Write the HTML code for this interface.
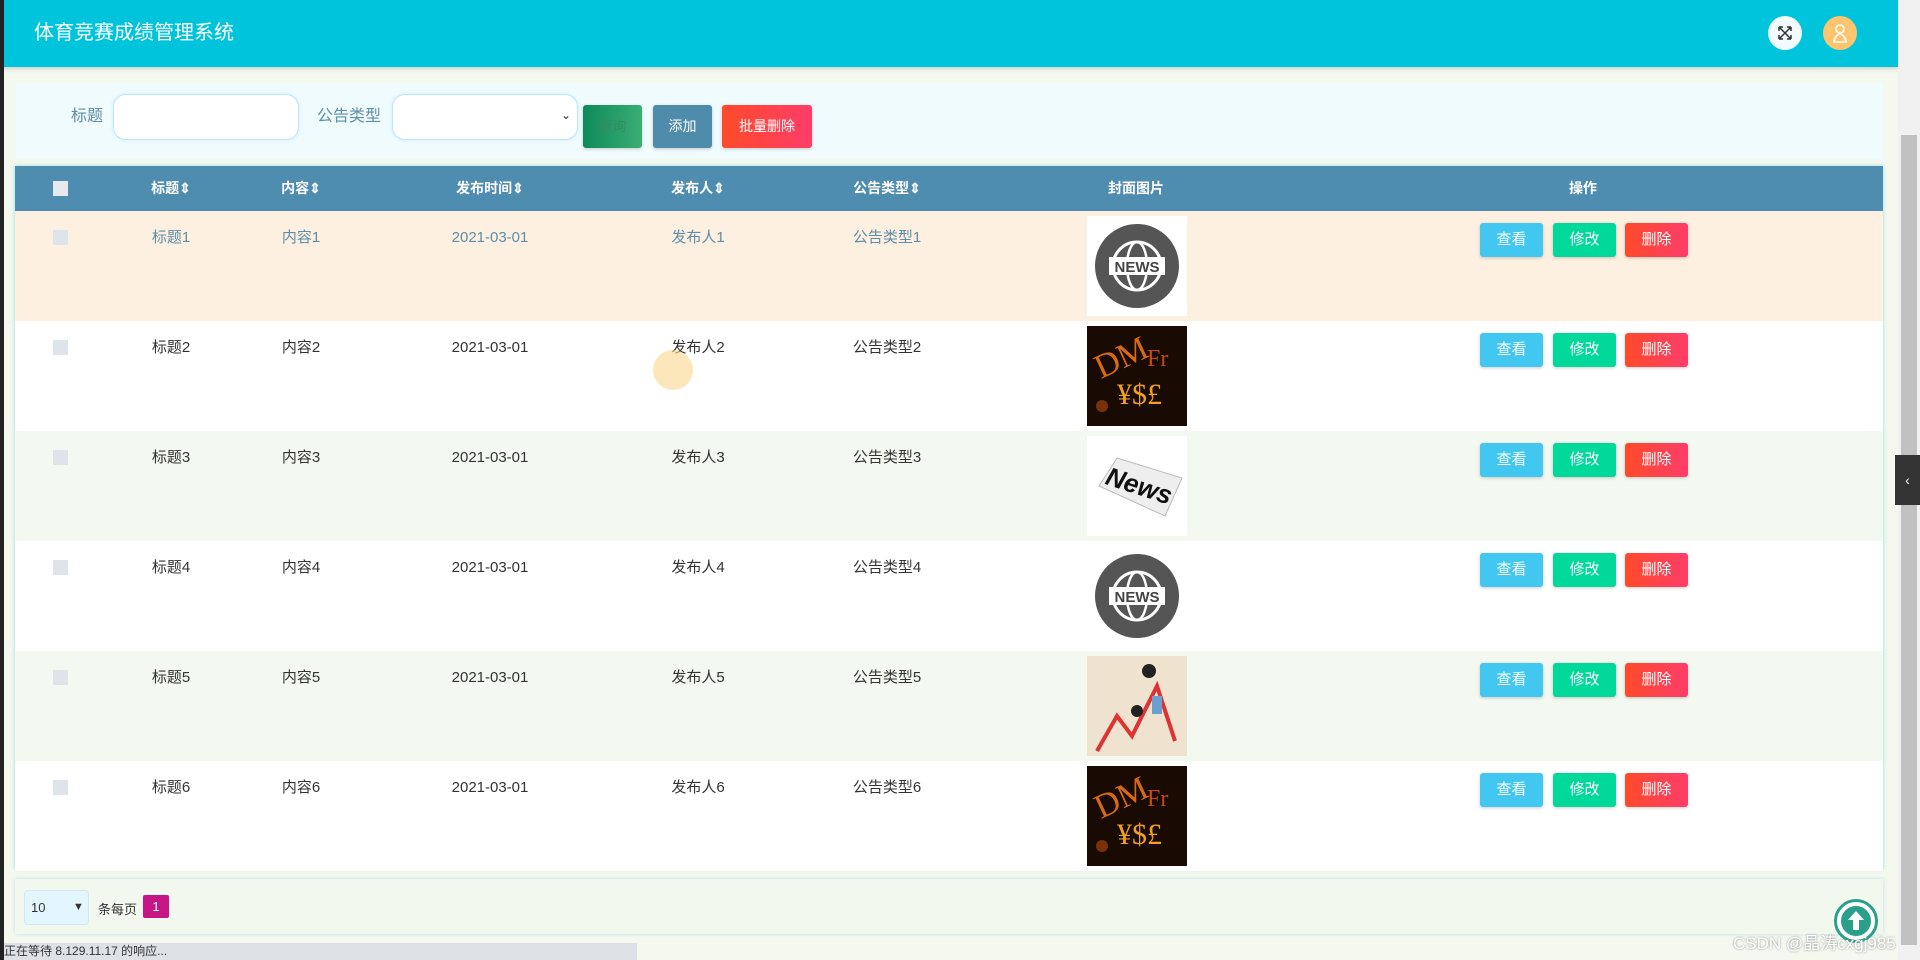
<!DOCTYPE html>
<html><head><meta charset="utf-8"><style>
*{margin:0;padding:0;box-sizing:border-box}
body{width:1920px;height:960px;overflow:hidden;background:#f4f8ef;font-family:"Liberation Sans","Noto Sans CJK SC",sans-serif;position:relative;font-size:15px;color:#333}
.a{position:absolute}
.hdr{left:0;top:0;width:1898px;height:67px;background:#00c4dc;box-shadow:0 2px 4px rgba(0,0,0,.15)}
.hdr .t{left:34px;top:20px;color:#fff;font-size:20px;line-height:26px}
.circ{border-radius:50%;width:34px;height:34px;top:16px}
.panel{left:15px;top:83px;width:1868px;height:76px;background:#f0fbfd}
.lbl{color:#5e8ea8;font-size:16px;line-height:20px}
.inp{background:#fff;border:1px solid #bfe6f5;border-radius:13px;box-shadow:0 0 4px #cdeefa}
.btn{color:#fff;font-size:14px;text-align:center;border-radius:3px;box-shadow:0 1px 3px rgba(0,0,0,.2)}
.tbl{left:15px;top:166px;width:1868px;height:703px;background:#fff;box-shadow:0 0 4px #8fe0e6}
.th{left:0;top:0;width:100%;height:45px;background:#4e8db0;color:#fff;font-weight:bold;font-size:14px}
.th span,.row span{position:absolute;transform:translateX(-50%);white-space:nowrap;line-height:20px}
.row{left:0;width:100%;height:110px}
.row span{top:17px;font-size:15px}
.cb{width:15px;height:15px;background:#dfe3ea;left:38px}
.img{left:1072px;top:5px;width:100px;height:100px;background:#fff}
.b{top:12px;width:63px;height:34px;line-height:34px;color:#fff;font-size:15px;text-align:center;border-radius:3px;box-shadow:0 1px 3px rgba(0,0,0,.2)}
.pg{left:15px;top:879px;width:1868px;height:55px;background:#f3f8ef;box-shadow:0 0 4px #bfe0f0}
</style></head><body>
<div class="a" style="left:0;top:0;width:4px;height:960px;background:#222;z-index:5"></div>
<div class="a hdr"><div class="a t">体育竞赛成绩管理系统</div>
<div class="a circ" style="left:1768px;background:#f2fbff"><svg width="34" height="34" viewBox="0 0 34 34" fill="none" stroke="#333" stroke-width="1.5"><path d="M11 11l12 12M23 11L11 23M11 11h4M11 11v4M23 11h-4M23 11v4M11 23h4M11 23v-4M23 23h-4M23 23v-4"/></svg></div>
<div class="a circ" style="left:1823px;background:#ffc46e"><svg width="34" height="34" viewBox="0 0 34 34" fill="none" stroke="#fff" stroke-width="1.6"><circle cx="17" cy="13" r="4"/><path d="M17 17c-3 2-6 5-6 9h12c0-4-3-7-6-9"/></svg></div>
</div>
<div class="a" style="left:1898px;top:0;width:22px;height:960px;background:#f1f1f1"></div>
<div class="a" style="left:1901px;top:135px;width:16px;height:810px;background:#c1c1c1"></div>
<div class="a" style="left:1895px;top:455px;width:25px;height:50px;background:#333;color:#fff;font-size:14px;line-height:50px;text-align:center">‹</div>

<div class="a panel">
<div class="a lbl" style="left:56px;top:24px">标题</div>
<div class="a inp" style="left:98px;top:11px;width:186px;height:46px"></div>
<div class="a lbl" style="left:302px;top:24px">公告类型</div>
<div class="a inp" style="left:377px;top:11px;width:186px;height:46px"><span class="a" style="right:6px;top:13px;font-size:12px;color:#333">⌄</span></div>
<div class="a btn" style="left:568px;top:22px;width:59px;height:43px;line-height:43px;background:linear-gradient(90deg,#0e8a5a,#3aae74);color:#3a8a60">查询</div>
<div class="a btn" style="left:638px;top:22px;width:59px;height:43px;line-height:43px;background:#4f8cac">添加</div>
<div class="a btn" style="left:707px;top:22px;width:90px;height:43px;line-height:43px;background:linear-gradient(90deg,#ff4a2a,#ff3d6a)">批量删除</div>
</div>

<div class="a tbl">
<div class="a th">
<div class="a cb" style="top:15px;background:#e6e9ee"></div>
<span style="left:156px;top:12px">标题⇕</span><span style="left:286px;top:12px">内容⇕</span><span style="left:475px;top:12px">发布时间⇕</span><span style="left:683px;top:12px">发布人⇕</span><span style="left:872px;top:12px">公告类型⇕</span><span style="left:1121px;top:12px">封面图片</span><span style="left:1568px;top:12px">操作</span>
</div>
</div>

<svg width="0" height="0" style="position:absolute"><defs>
<g id="globe"><rect width="100" height="100" fill="#fff"/><circle cx="50" cy="50" r="42" fill="#555"/><circle cx="50" cy="50" r="24" fill="none" stroke="#fff" stroke-width="3"/><ellipse cx="50" cy="50" rx="10" ry="24" fill="none" stroke="#fff" stroke-width="2.5"/><rect x="22" y="41" width="56" height="18" fill="#fff"/><text x="50" y="56" font-family="Liberation Sans" font-weight="bold" font-size="15" text-anchor="middle" fill="#444">NEWS</text></g>
<g id="fire"><rect width="100" height="100" fill="#1a0a04"/><text x="10" y="45" font-family="Liberation Serif" font-size="34" fill="#d86a10" transform="rotate(-25 30 40)">DM</text><text x="30" y="78" font-family="Liberation Serif" font-size="30" fill="#f0a020">¥$£</text><text x="60" y="40" font-size="24" fill="#c04a08" font-family="Liberation Serif">Fr</text><circle cx="15" cy="80" r="6" fill="#7a3008"/></g>
<g id="paper"><rect width="100" height="100" fill="#fff"/><polygon points="12,50 30,22 95,42 78,80" fill="#eee" stroke="#bbb"/><text x="18" y="58" font-family="Liberation Sans" font-weight="bold" font-style="italic" font-size="26" fill="#111" transform="rotate(18 50 50)">News</text></g>
<g id="chart"><rect width="100" height="100" fill="#efe2cf"/><polyline points="10,95 30,60 45,80 70,30 88,85" fill="none" stroke="#d33" stroke-width="4"/><circle cx="62" cy="15" r="7" fill="#222"/><circle cx="50" cy="55" r="6" fill="#222"/><rect x="65" y="40" width="10" height="18" fill="#6aa0d0"/></g>
</defs></svg>

<div id="rows"></div>
<script>
var bgs=["#fdf0e0","#fff","#f3f8f0","#fff","#f3f8f0","#fff"],imgs=["globe","fire","paper","globe","chart","fire"],h="";
for(var i=0;i<6;i++){var c=i==0?"#5e8ea8":"#333";
h+='<div class="a row" style="left:15px;width:1868px;top:'+(211+i*110)+'px;background:'+bgs[i]+';color:'+c+'">'+
'<div class="a cb" style="top:19px"></div>'+
'<span style="left:156px">标题'+(i+1)+'</span><span style="left:286px">内容'+(i+1)+'</span><span style="left:475px">2021-03-01</span><span style="left:683px">发布人'+(i+1)+'</span><span style="left:872px">公告类型'+(i+1)+'</span>'+
'<svg class="a img" viewBox="0 0 100 100"><use href="#'+imgs[i]+'"/></svg>'+
'<div class="a b" style="left:1465px;background:#42c8f0">查看</div><div class="a b" style="left:1538px;background:#00d99a">修改</div><div class="a b" style="left:1610px;background:linear-gradient(90deg,#ff4a2a,#ff3d6a)">删除</div></div>';}
document.getElementById("rows").innerHTML=h;
</script>
<div class="a" style="left:653px;top:350px;width:40px;height:40px;border-radius:50%;background:rgba(250,215,140,.6)"></div>

<div class="a pg">
<div class="a" style="left:9px;top:11px;width:65px;height:35px;background:#e3f6fd;border-radius:4px;border:1px solid #cfeaf6;font-size:13px;line-height:33px;padding-left:6px">10<span class="a" style="left:48px;font-size:11px">▼</span></div>
<div class="a" style="left:83px;top:20px;font-size:13px">条每页</div>
<div class="a" style="left:128px;top:16px;width:26px;height:23px;background:#c71585;color:#fff;font-size:13px;text-align:center;line-height:23px;border-radius:2px">1</div>
</div>
<div class="a" style="left:1834px;top:899px;width:44px;height:44px;border-radius:50%;border:3px solid #2aa08a;background:#fff"><svg width="38" height="38" viewBox="0 0 38 38"><circle cx="19" cy="19" r="15" fill="#2aa08a"/><path d="M19 9l-8 9h5v10h6V18h5z" fill="#fff"/></svg></div>
<div class="a" style="left:0;top:943px;width:637px;height:17px;background:#dee1e6;font-size:12px;color:#333;padding-left:4px;line-height:17px">正在等待 8.129.11.17 的响应...</div>
<div class="a" style="left:1733px;top:929px;font-size:17px;color:#fff;text-shadow:0 0 2px #888">CSDN @晶涛cxgj985</div>
</body></html>
